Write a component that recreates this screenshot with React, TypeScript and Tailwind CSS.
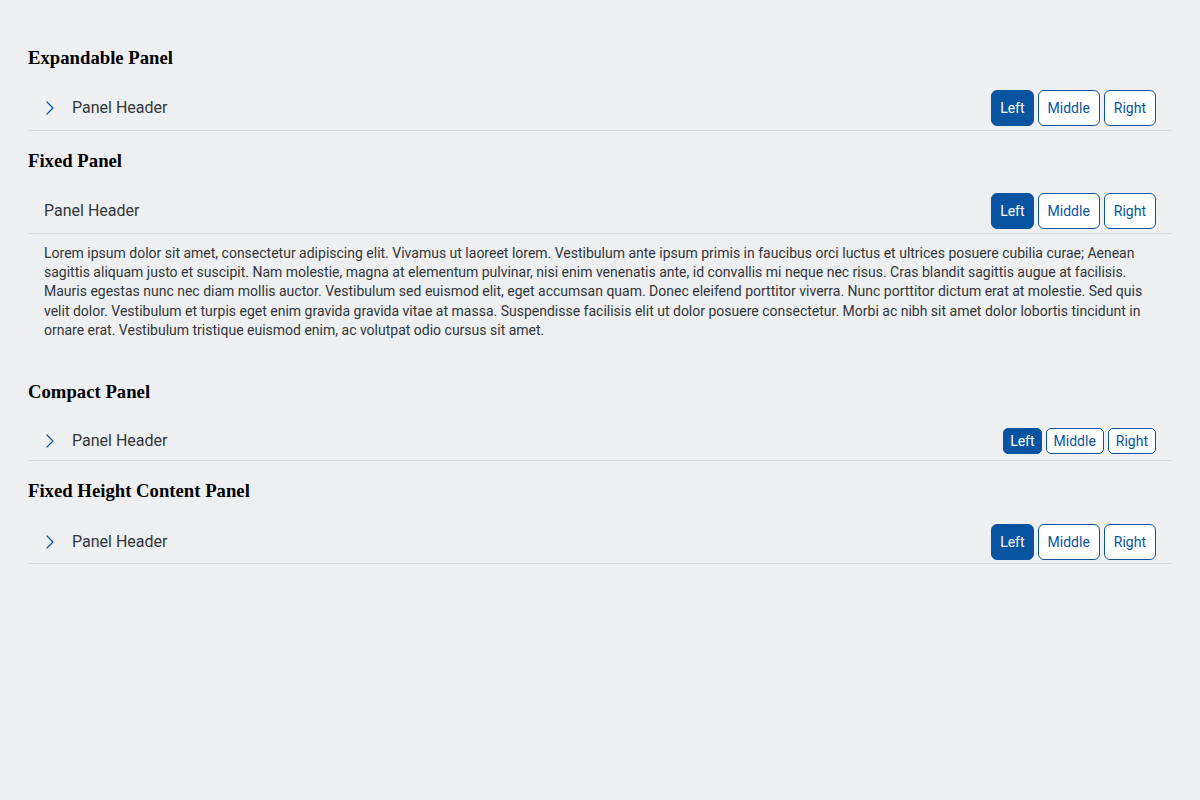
import { ChevronRight } from 'lucide-react'

const lorem =
  'Lorem ipsum dolor sit amet, consectetur adipiscing elit. Vivamus ut laoreet lorem. Vestibulum ante ipsum primis in faucibus orci luctus et ultrices posuere cubilia curae; Aenean sagittis aliquam justo et suscipit. Nam molestie, magna at elementum pulvinar, nisi enim venenatis ante, id convallis mi neque nec risus. Cras blandit sagittis augue at facilisis. Mauris egestas nunc nec diam mollis auctor. Vestibulum sed euismod elit, eget accumsan quam. Donec eleifend porttitor viverra. Nunc porttitor dictum erat at molestie. Sed quis velit dolor. Vestibulum et turpis eget enim gravida gravida vitae at massa. Suspendisse facilisis elit ut dolor posuere consectetur. Morbi ac nibh sit amet dolor lobortis tincidunt in ornare erat. Vestibulum tristique euismod enim, ac volutpat odio cursus sit amet.'

function Segmented({ compact }: { compact?: boolean }) {
  const base = compact ? 'h-[26px] rounded-[5px] text-sm' : 'h-9 rounded-md text-sm'
  const pad = compact ? 'px-[7px]' : 'px-[9px]'
  const padFirst = compact ? 'px-[6px]' : 'px-[8px]'
  return (
    <div className="flex items-center gap-1">
      <button className={`${base} ${padFirst} border border-[#0854a0] bg-[#0854a0] text-white`}>Left</button>
      <button className={`${base} ${pad} border border-[#0854a0] bg-white text-[#0854a0]`}>Middle</button>
      <button className={`${base} ${pad} border border-[#0854a0] bg-white text-[#0854a0]`}>Right</button>
    </div>
  )
}

function PanelHeader({ expandable = true, compact }: { expandable?: boolean; compact?: boolean }) {
  return (
    <div
      className={`flex items-center justify-between border-b border-[#d9d9d9] pr-4 ${
        compact ? 'h-10' : 'h-11'
      } ${expandable ? 'pl-1' : 'pl-4'}`}
    >
      <div className="flex items-center">
        {expandable && (
          <span className="flex h-9 w-9 items-center justify-center text-[#0854a0]">
            <ChevronRight size={24} strokeWidth={1.2} />
          </span>
        )}
        <span className={`text-base text-[#32363a] ${expandable ? 'ml-1' : ''}`}>Panel Header</span>
      </div>
      <Segmented compact={compact} />
    </div>
  )
}

function Heading({ children }: { children: string }) {
  return (
    <h3 className="my-[18.72px] font-['Liberation_Serif',serif] text-[18.72px] leading-[21.5px] font-bold text-black">
      {children}
    </h3>
  )
}

export default function App() {
  return (
    <div className="min-h-[800px] bg-[#edeff0] p-7 font-['Roboto',sans-serif]">
      <Heading>Expandable Panel</Heading>
      <PanelHeader />

      <Heading>Fixed Panel</Heading>
      <PanelHeader expandable={false} />
      <div className="px-4 pt-2.5 pb-[22px] text-sm leading-[19.3px] text-[#32363a]">{lorem}</div>

      <Heading>Compact Panel</Heading>
      <PanelHeader compact />

      <Heading>Fixed Height Content Panel</Heading>
      <PanelHeader />
    </div>
  )
}
